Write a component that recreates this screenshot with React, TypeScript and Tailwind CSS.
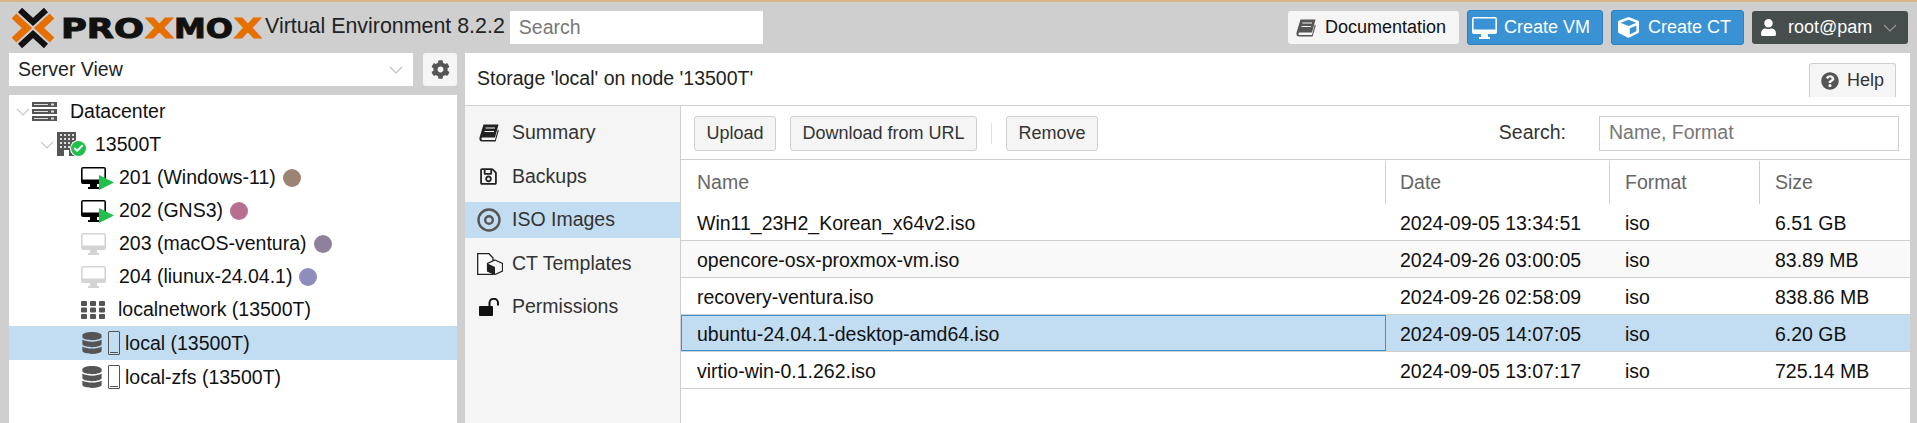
import React from "react";
import { Check } from "lucide-react";
import { FaCog, FaCube, FaUser, FaQuestionCircle, FaDatabase, FaRegSave } from "react-icons/fa";

const Chevron = ({ cls }: { cls: string }) => (
  <svg width="14" height="8" viewBox="0 0 14 8" className={`shrink-0 ${cls}`}>
    <path d="M1 1L7 7L13 1" fill="none" stroke="currentColor" strokeWidth="1.2" />
  </svg>
);

const Book = ({ cls, size = 20 }: { cls: string; size?: number }) => (
  <svg width={size} height={size * 0.9} viewBox="0 0 20 18" className={cls}>
    <path d="M4.5.5H19.5L16 13.5H3.8C2 13.5 2 16 3.8 16H16L18.8 5.5L19.8 6.5L16.6 17.5H3C.2 17.5 0 14.5 1 12Z" fill="currentColor" />
    <path d="M6.5 4H16M5.6 7.5H15" stroke="#f5f5f5" strokeWidth="1" />
  </svg>
);

const Monitor = ({ cls }: { cls: string }) => (
  <svg width="25" height="22" viewBox="0 0 25 22" className={cls}>
    <path fillRule="evenodd" fill="currentColor" d="M2 0H23A2 2 0 0 1 25 2V15A2 2 0 0 1 23 17H2A2 2 0 0 1 0 15V2A2 2 0 0 1 2 0ZM1.6 1.6V12.5H23.4V1.6Z" />
    <path fill="currentColor" d="M9 17H16V20H18V22H7V20H9Z" />
  </svg>
);

const Logo = () => (
  <svg width="265" height="48" viewBox="0 0 265 48" className="shrink-0">
    <g fill="none">
      <path d="M14 14L27 26L14 38" stroke="#e57000" strokeWidth="7" />
      <path d="M52 14L39 26L52 38" stroke="#e57000" strokeWidth="7" />
      <path d="M20 8L33 20L46 8" stroke="#111" strokeWidth="6" />
      <path d="M20 44L33 32L46 44" stroke="#111" strokeWidth="6" />
    </g>
    <g fontFamily="'DejaVu Sans', sans-serif" fontWeight="700" fontSize="27">
      <text x="61" y="36" textLength="83" lengthAdjust="spacingAndGlyphs" fill="#111" stroke="#111" strokeWidth="1">PRO</text>
      <text x="145" y="36" textLength="29" lengthAdjust="spacingAndGlyphs" fill="#e57000" stroke="#e57000" strokeWidth="1">X</text>
      <text x="174" y="36" textLength="59" lengthAdjust="spacingAndGlyphs" fill="#111" stroke="#111" strokeWidth="1">MO</text>
      <text x="234" y="36" textLength="28" lengthAdjust="spacingAndGlyphs" fill="#e57000" stroke="#e57000" strokeWidth="1">X</text>
    </g>
  </svg>
);

const Vm = ({ on }: { on?: boolean }) => (
  <span className="relative w-[33px] h-[26px] shrink-0">
    <Monitor cls={`absolute left-0 top-[2px] ${on ? "text-black" : "text-[#d4d4d4]"}`} />
    {on && (
      <svg className="absolute left-[18px] top-[10px]" width="15" height="15" viewBox="0 0 15 15">
        <path d="M0 0L15 7.5L0 15Z" fill="#21bf4b" />
      </svg>
    )}
  </span>
);

const Tag = ({ color }: { color: string }) => <span className={`w-[18px] h-[18px] rounded-full ml-[7px] ${color}`} />;

const Disk = () => (
  <span className="flex items-center gap-[5px] shrink-0">
    <FaDatabase className="text-[#555]" size={22} />
    <span className="w-[12px] h-[24px] border border-[#555] rounded-[1px] flex items-end justify-center pb-[1px]">
      <span className="w-[8px] h-px bg-[#555]" />
    </span>
  </span>
);

const Row = ({ indent, children, sel, h = "h-[33px]" }: { indent: string; children: React.ReactNode; sel?: boolean; h?: string }) => (
  <div className={`flex items-center ${h} ${indent} ${sel ? "bg-[#c2ddf2]" : ""}`}>{children}</div>
);

const Tree = () => (
  <div className="flex-1 bg-white text-[19.5px] text-[#111]">
    <Row indent="pl-[7px]">
      <Chevron cls="text-[#c8c8c8] mr-[2px]" />
      <svg width="25" height="20" viewBox="0 0 25 20" className="mr-[13px]">
        {[0, 7, 14].map((y) => (
          <g key={y}>
            <rect x="0" y={y} width="25" height="5" fill="#555" />
            <rect x="2" y={y + 2} width="14" height="1" fill="#ddd" />
            <rect x="19" y={y + 1.5} width="3" height="2" fill="#ddd" />
          </g>
        ))}
      </svg>
      <span>Datacenter</span>
    </Row>
    <Row indent="pl-[31px]">
      <Chevron cls="text-[#c8c8c8] mr-[3px]" />
      <span className="relative w-[38px] h-[26px]">
        <svg width="19" height="24" viewBox="0 0 19 24" className="absolute left-0 top-0">
          <rect width="19" height="24" fill="#555" />
          {[2, 6, 10, 14].map((y) => [3, 7, 11, 15].map((x) => <rect key={`${x}-${y}`} x={x} y={y} width="2" height="2" fill="#ddd" />))}
          <rect x="7" y="18" width="5" height="6" fill="#fff" />
        </svg>
        <span className="absolute left-[14px] top-[9px] w-[15px] h-[15px] rounded-full bg-[#21bf4b] flex items-center justify-center ring-1 ring-white">
          <Check className="text-white w-[11px] h-[11px]" strokeWidth={4} />
        </span>
      </span>
      <span>13500T</span>
    </Row>
    <Row indent="pl-[72px]"><Vm on /><span className="ml-[5px]">201 (Windows-11)</span><Tag color="bg-[#9c8374]" /></Row>
    <Row indent="pl-[72px]"><Vm on /><span className="ml-[5px]">202 (GNS3)</span><Tag color="bg-[#b86f8f]" /></Row>
    <Row indent="pl-[72px]"><Vm /><span className="ml-[5px]">203 (macOS-ventura)</span><Tag color="bg-[#8f819c]" /></Row>
    <Row indent="pl-[72px]"><Vm /><span className="ml-[5px]">204 (liunux-24.04.1)</span><Tag color="bg-[#8f8dbc]" /></Row>
    <Row indent="pl-[72px]">
      <svg width="24" height="18" viewBox="0 0 24 18" className="mr-[13px]">
        {[0, 6.5, 13].map((y) => [0, 9, 18].map((x) => <rect key={`${x}-${y}`} x={x} y={y} width="6" height="5" rx="1" fill="#555" />))}
      </svg>
      <span className="pt-[1px]">localnetwork (13500T)</span>
    </Row>
    <Row indent="pl-[72px]" sel h="h-[34px]"><Disk /><span className="ml-[5px] pt-[2px]">local (13500T)</span></Row>
    <Row indent="pl-[72px]" h="h-[34px]"><Disk /><span className="ml-[5px] pt-[2px]">local-zfs (13500T)</span></Row>
  </div>
);

const TopBtn = ({ children, cls }: { children: React.ReactNode; cls: string }) => (
  <div className={`flex items-center rounded-[3px] text-[18px] ${cls}`}>{children}</div>
);

const Nav = ({ icon, label, sel }: { icon: React.ReactNode; label: string; sel?: boolean }) => (
  <div className={`flex items-center h-[36px] pl-[12px] mb-[7.5px] text-[#333] ${sel ? "bg-[#c2ddf2]" : ""}`}>
    <span className="w-[35px] flex items-center shrink-0">{icon}</span>
    {label}
  </div>
);

const Btn = ({ label, cls }: { label: string; cls: string }) => (
  <div className={`h-[35px] flex items-center justify-center rounded-[3px] border border-[#cfcfcf] bg-[#f5f5f5] text-[#333] text-[18px] ${cls}`}>{label}</div>
);

const rows = [
  ["Win11_23H2_Korean_x64v2.iso", "2024-09-05 13:34:51", "iso", "6.51 GB"],
  ["opencore-osx-proxmox-vm.iso", "2024-09-26 03:00:05", "iso", "83.89 MB"],
  ["recovery-ventura.iso", "2024-09-26 02:58:09", "iso", "838.86 MB"],
  ["ubuntu-24.04.1-desktop-amd64.iso", "2024-09-05 14:07:05", "iso", "6.20 GB"],
  ["virtio-win-0.1.262.iso", "2024-09-05 13:07:17", "iso", "725.14 MB"],
];

export default function App() {
  return (
    <div className="w-[1917px] h-[423px] overflow-hidden bg-[#cfcfcf] font-['Liberation_Sans',Arial,sans-serif] text-[19.5px] text-[#111] flex flex-col">
      <header className="h-[53px] shrink-0 border-t-2 border-[#d8b48a] flex items-center">
        <div className="w-[265px] -mt-[4px]"><Logo /></div>
        <span className="text-[21.4px] text-[#222] -mt-[2px] whitespace-nowrap">Virtual Environment 8.2.2</span>
        <div className="ml-[5px] w-[253px] h-[33px] bg-white flex items-center pl-[9px] text-[#777]">Search</div>
        <div className="flex-1" />
        <div className="flex items-center gap-[8px] mr-[9px]">
          <TopBtn cls="w-[171px] h-[33px] bg-[#f5f5f5] pl-[8px] text-[#111]"><Book cls="text-[#555] mr-[9px]" size={20} />Documentation</TopBtn>
          <TopBtn cls="w-[136px] h-[35px] bg-[#3892d4] border border-[#2d80bd] text-white pl-[4px]"><Monitor cls="mr-[7px]" />Create VM</TopBtn>
          <TopBtn cls="w-[133px] h-[35px] bg-[#3892d4] border border-[#2d80bd] text-white pl-[6px]"><FaCube className="mr-[9px]" size={21} />Create CT</TopBtn>
          <TopBtn cls="w-[156px] h-[33px] bg-[#464d4d] text-white pl-[8px] pr-[11px]">
            <FaUser className="mr-[11px] shrink-0" size={17} />
            <span className="flex-1">root@pam</span>
            <Chevron cls="text-[#999]" />
          </TopBtn>
        </div>
      </header>
      <div className="flex-1 flex min-h-0">
        <aside className="w-[457px] shrink-0 ml-[9px] flex flex-col">
          <div className="flex gap-[10px] h-[33px] shrink-0 mb-[9px]">
            <div className="w-[404px] bg-white flex items-center justify-between pl-[9px] pr-[10px] text-[#222]">
              <span className="pt-[1px]">Server View</span>
              <Chevron cls="text-[#c0c0c0]" />
            </div>
            <div className="w-[34px] bg-[#f5f5f5] rounded-[3px] flex items-center justify-center">
              <FaCog className="text-[#555]" size={19} />
            </div>
          </div>
          <div className="w-[448px] flex-1 flex flex-col"><Tree /></div>
        </aside>
        <main className="flex-1 ml-[-1px] mr-[7px] bg-white flex flex-col min-w-0">
          <div className="h-[53px] shrink-0 border-b border-[#cfcfcf] flex items-center justify-between pl-[12px] pr-[14px] text-[#222]">
            <span>Storage 'local' on node '13500T'</span>
            <div className="w-[87px] h-[34px] mt-[2px] flex items-center justify-center gap-[8px] border border-b-0 border-[#cfcfcf] rounded-t-[3px] bg-[#f5f5f5] text-[#333] text-[18px]">
              <FaQuestionCircle className="text-[#555]" size={18} />Help
            </div>
          </div>
          <div className="flex-1 flex min-h-0">
            <nav className="w-[216px] shrink-0 bg-[#f5f5f5] border-r border-[#cfcfcf] pt-[9px]">
              <Nav icon={<Book size={20} cls="text-[#222] ml-[2px]" />} label="Summary" />
              <Nav icon={<FaRegSave size={19} className="text-[#222] ml-[2px]" />} label="Backups" />
              <Nav sel icon={
                <svg width="24" height="24" viewBox="0 0 24 24">
                  <circle cx="12" cy="12" r="10.5" fill="none" stroke="#555" strokeWidth="2.4" />
                  <circle cx="12" cy="12" r="3.8" fill="none" stroke="#555" strokeWidth="2.4" />
                </svg>
              } label="ISO Images" />
              <Nav icon={
                <svg width="26" height="22" viewBox="0 0 26 22">
                  <path d="M.7.7H12L16 5V21.3H.7Z" fill="#fff" stroke="#222" strokeWidth="1.3" />
                  <path d="M18 7L25.5 10.5V18L18 21.5L10.5 18V10.5Z" fill="#f5f5f5" stroke="#222" strokeWidth="1.2" />
                  <path d="M10.5 10.5L18 14V21.5L10.5 18Z" fill="#222" />
                </svg>
              } label="CT Templates" />
              <Nav icon={
                <svg width="21" height="18" viewBox="0 0 21 18" className="ml-[2px]">
                  <rect x="0" y="8" width="14" height="10" rx="1" fill="#111" />
                  <path d="M10.5 8V5A4.2 4.2 0 0 1 19 5V7.5" fill="none" stroke="#111" strokeWidth="2" />
                </svg>
              } label="Permissions" />
            </nav>
            <section className="flex-1 flex flex-col min-w-0">
              <div className="h-[54px] shrink-0 flex items-center pt-[1px] pl-[13px] pr-[11px] border-b border-[#cfcfcf] text-[#333]">
                <Btn label="Upload" cls="w-[82px]" />
                <Btn label="Download from URL" cls="w-[187px] ml-[14px]" />
                <span className="w-px h-[21px] bg-[#e0e0e0] mx-[14px]" />
                <Btn label="Remove" cls="w-[92px]" />
                <div className="flex-1" />
                <span className="mr-[33px] text-[#333]">Search:</span>
                <div className="w-[300px] h-[35px] border border-[#cfcfcf] flex items-center pl-[9px] text-[#777]">Name, Format</div>
              </div>
              <div className="h-[44px] shrink-0 flex pt-[1px] text-[#666]">
                <div className="w-[705px] pl-[16px] flex items-center border-r border-[#cfcfcf]">Name</div>
                <div className="w-[224px] pl-[14px] flex items-center border-r border-[#cfcfcf]">Date</div>
                <div className="w-[150px] pl-[15px] flex items-center border-r border-[#cfcfcf]">Format</div>
                <div className="flex-1 pl-[15px] flex items-center">Size</div>
              </div>
              {rows.map((r, i) => (
                <div key={r[0]} className={`h-[37px] shrink-0 flex items-center border-b border-[#cfcfcf] ${i === 1 ? "bg-[#f9f9f9]" : ""} ${i === 3 ? "bg-[#c2ddf2]" : ""} text-[#111]`}>
                  <div className={`w-[705px] h-full pt-[3px] flex items-center ${i === 3 ? "border border-[#3892d4] pl-[15px]" : "pl-[16px]"}`}>{r[0]}</div>
                  <div className="w-[224px] pl-[14px] pt-[3px]">{r[1]}</div>
                  <div className="w-[150px] pl-[15px] pt-[3px]">{r[2]}</div>
                  <div className="flex-1 pl-[15px] pt-[3px]">{r[3]}</div>
                </div>
              ))}
            </section>
          </div>
        </main>
      </div>
    </div>
  );
}
